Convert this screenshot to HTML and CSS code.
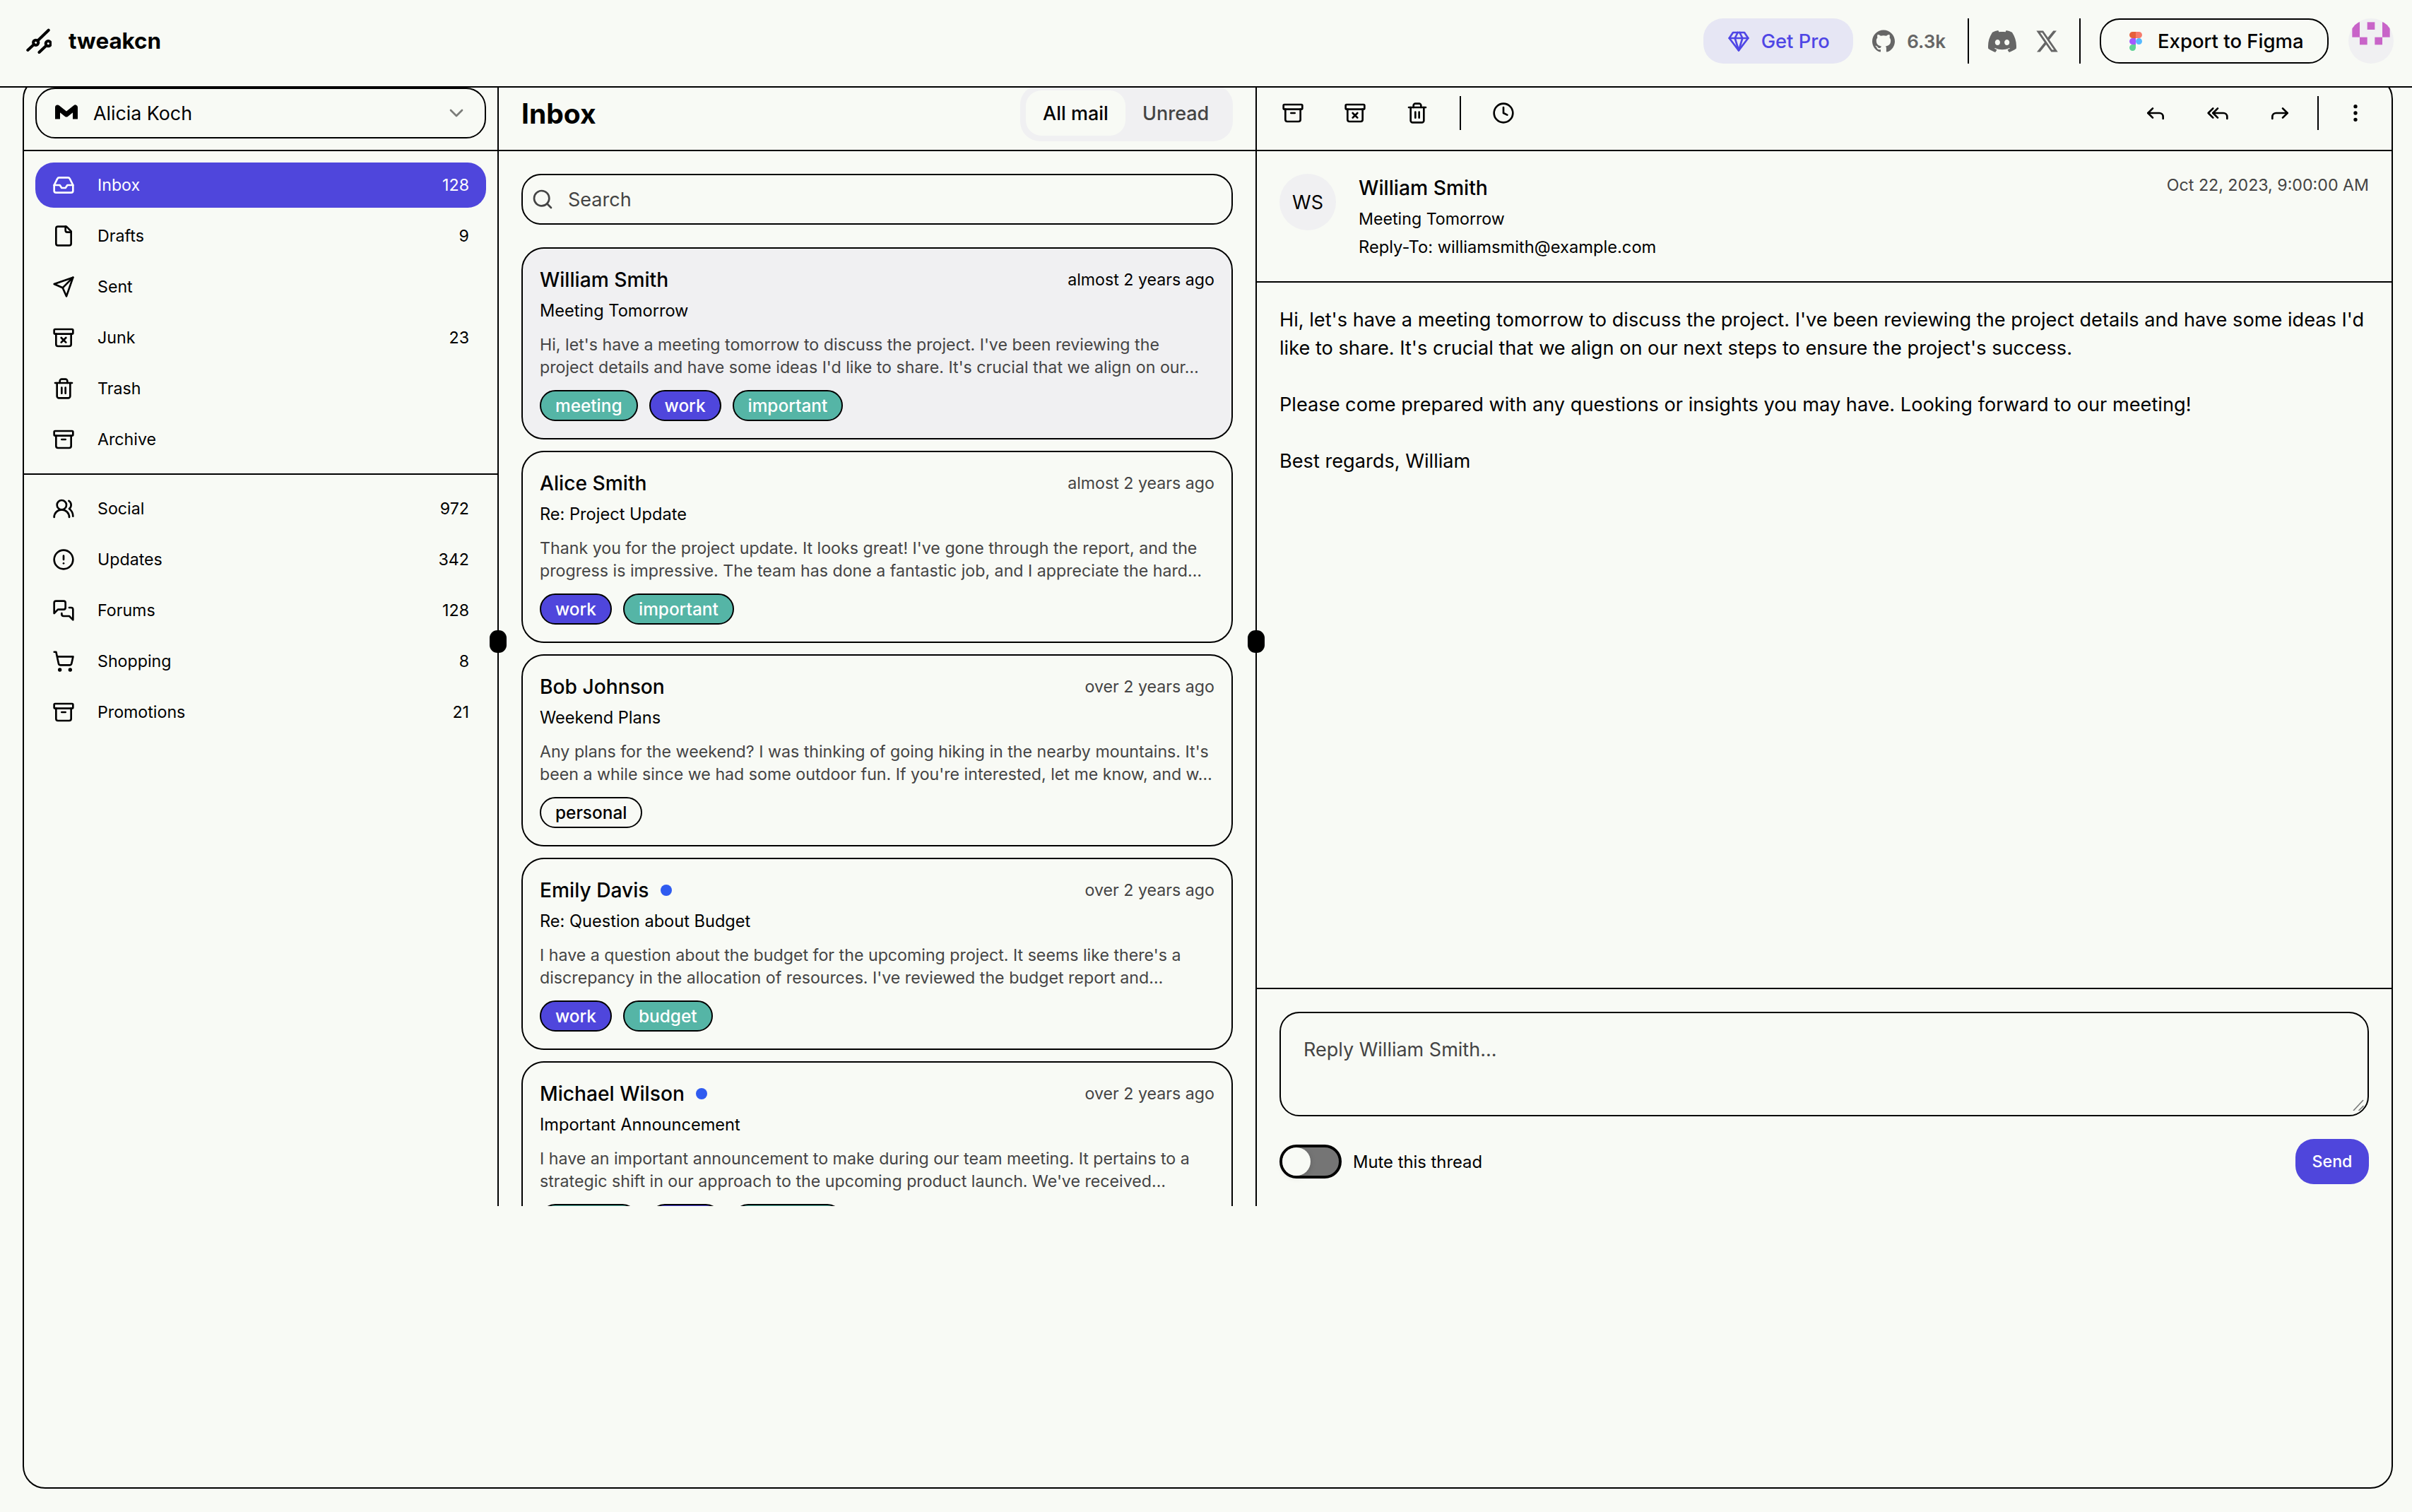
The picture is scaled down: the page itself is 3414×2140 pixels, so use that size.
FILE: index.html
```html
<!doctype html>
<html lang="en">
<head>
<meta charset="utf-8">
<title>tweakcn mail</title>
<link rel="stylesheet" href="styles.css">
</head>
<body>
<svg class="sprite" aria-hidden="true">
  <symbol id="i-inbox" viewBox="0 0 24 24"><polyline points="22 12 16 12 14 15 10 15 8 12 2 12"/><path d="M5.45 5.11 2 12v6a2 2 0 0 0 2 2h16a2 2 0 0 0 2-2v-6l-3.45-6.89A2 2 0 0 0 16.76 4H7.24a2 2 0 0 0-1.79 1.11z"/></symbol>
  <symbol id="i-file" viewBox="0 0 24 24"><path d="M15 2H6a2 2 0 0 0-2 2v16a2 2 0 0 0 2 2h12a2 2 0 0 0 2-2V7Z"/><path d="M14 2v4a2 2 0 0 0 2 2h4"/></symbol>
  <symbol id="i-send" viewBox="0 0 24 24"><path d="m22 2-7 20-4-9-9-4Z"/><path d="M22 2 11 13"/></symbol>
  <symbol id="i-junk" viewBox="0 0 24 24"><rect width="20" height="5" x="2" y="3" rx="1"/><path d="M4 8v11a2 2 0 0 0 2 2h12a2 2 0 0 0 2-2V8"/><path d="m9.5 17 5-5"/><path d="m9.5 12 5 5"/></symbol>
  <symbol id="i-trash" viewBox="0 0 24 24"><path d="M3 6h18"/><path d="M19 6v14c0 1-1 2-2 2H7c-1 0-2-1-2-2V6"/><path d="M8 6V4c0-1 1-2 2-2h4c1 0 2 1 2 2v2"/><line x1="10" x2="10" y1="11" y2="17"/><line x1="14" x2="14" y1="11" y2="17"/></symbol>
  <symbol id="i-archive" viewBox="0 0 24 24"><rect width="20" height="5" x="2" y="3" rx="1"/><path d="M4 8v11a2 2 0 0 0 2 2h12a2 2 0 0 0 2-2V8"/><path d="M10 12h4"/></symbol>
  <symbol id="i-users" viewBox="0 0 24 24"><path d="M18 21a8 8 0 0 0-16 0"/><circle cx="10" cy="8" r="5"/><path d="M22 20c0-3.37-2-6.5-4-8a5 5 0 0 0-.45-8.3"/></symbol>
  <symbol id="i-alert" viewBox="0 0 24 24"><circle cx="12" cy="12" r="10"/><line x1="12" x2="12" y1="8" y2="12"/><line x1="12" x2="12.01" y1="16" y2="16"/></symbol>
  <symbol id="i-messages" viewBox="0 0 24 24"><path d="M14 9a2 2 0 0 1-2 2H6l-4 4V4c0-1.1.9-2 2-2h8a2 2 0 0 1 2 2z"/><path d="M18 9h2a2 2 0 0 1 2 2v11l-4-4h-6a2 2 0 0 1-2-2v-1"/></symbol>
  <symbol id="i-cart" viewBox="0 0 24 24"><circle cx="8" cy="21" r="1"/><circle cx="19" cy="21" r="1"/><path d="M2.05 2.05h2l2.66 12.42a2 2 0 0 0 2 1.58h9.78a2 2 0 0 0 1.95-1.57l1.65-7.43H5.12"/></symbol>
  <symbol id="i-clock" viewBox="0 0 24 24"><circle cx="12" cy="12" r="10"/><polyline points="12 6 12 12 16 14"/></symbol>
  <symbol id="i-reply" viewBox="0 0 24 24"><polyline points="9 17 4 12 9 7"/><path d="M20 18v-2a4 4 0 0 0-4-4H4"/></symbol>
  <symbol id="i-replyall" viewBox="0 0 24 24"><polyline points="7 17 2 12 7 7"/><polyline points="12 17 7 12 12 7"/><path d="M22 18v-2a4 4 0 0 0-4-4H7"/></symbol>
  <symbol id="i-forward" viewBox="0 0 24 24"><polyline points="15 17 20 12 15 7"/><path d="M4 18v-2a4 4 0 0 1 4-4h12"/></symbol>
  <symbol id="i-more" viewBox="0 0 24 24"><circle cx="12" cy="12" r="1"/><circle cx="12" cy="5" r="1"/><circle cx="12" cy="19" r="1"/></symbol>
  <symbol id="i-search" viewBox="0 0 24 24"><circle cx="11" cy="11" r="8"/><path d="m21 21-4.3-4.3"/></symbol>
  <symbol id="i-chevron" viewBox="0 0 24 24"><path d="m6 9 6 6 6-6"/></symbol>
  <symbol id="i-gem" viewBox="0 0 24 24"><path d="M6 3h12l4 6-10 13L2 9Z"/><path d="M11 3 8 9l4 13 4-13-3-6"/><path d="M2 9h20"/></symbol>
</svg>

<header class="topbar">
  <a class="brand">
    <svg class="brand-mark" viewBox="0 0 36 36">
      <path d="M31.7 2.7 16.2 17.8"/><circle cx="13.7" cy="20.3" r="3.6"/><path d="M11.2 22.8 2.3 31"/>
      <path d="M18.5 34 28.8 24.2"/><circle cx="31.3" cy="21.7" r="3.6"/>
    </svg>
    <span>tweakcn</span>
  </a>
  <div class="top-actions">
    <a class="pro"><svg class="icon"><use href="#i-gem"/></svg><span>Get Pro</span></a>
    <a class="stars">
      <svg class="brandicon" viewBox="0 0 24 24"><path d="M12 .297c-6.63 0-12 5.373-12 12 0 5.303 3.438 9.8 8.205 11.385.6.113.82-.258.82-.577 0-.285-.01-1.04-.015-2.04-3.338.724-4.042-1.61-4.042-1.61C4.422 18.07 3.633 17.7 3.633 17.7c-1.087-.744.084-.729.084-.729 1.205.084 1.838 1.236 1.838 1.236 1.07 1.835 2.809 1.305 3.495.998.108-.776.417-1.305.76-1.605-2.665-.3-5.466-1.332-5.466-5.93 0-1.31.465-2.38 1.235-3.22-.135-.303-.54-1.523.105-3.176 0 0 1.005-.322 3.3 1.23.96-.267 1.98-.399 3-.405 1.02.006 2.04.138 3 .405 2.28-1.552 3.285-1.23 3.285-1.23.645 1.653.24 2.873.12 3.176.765.84 1.23 1.91 1.23 3.22 0 4.61-2.805 5.625-5.475 5.92.42.36.81 1.096.81 2.22 0 1.606-.015 2.896-.015 3.286 0 .315.21.69.825.57C20.565 22.092 24 17.592 24 12.297c0-6.627-5.373-12-12-12"/></svg>
      <span>6.3k</span>
    </a>
    <i class="vsep"></i>
    <svg class="discord" viewBox="0 2.8 24 18.4" preserveAspectRatio="none"><path d="M20.317 4.3698a19.7913 19.7913 0 00-4.8851-1.5152.0741.0741 0 00-.0785.0371c-.211.3753-.4447.8648-.6083 1.2495-1.8447-.2762-3.68-.2762-5.4868 0-.1636-.3933-.4058-.8742-.6177-1.2495a.077.077 0 00-.0785-.037 19.7363 19.7363 0 00-4.8852 1.515.0699.0699 0 00-.0321.0277C.5334 9.0458-.319 13.5799.0992 18.0578a.0824.0824 0 00.0312.0561c2.0528 1.5076 4.0413 2.4228 5.9929 3.0294a.0777.0777 0 00.0842-.0276c.4616-.6304.8731-1.2952 1.226-1.9942a.076.076 0 00-.0416-.1057c-.6528-.2476-1.2743-.5495-1.8722-.8923a.077.077 0 01-.0076-.1277c.1258-.0943.2517-.1923.3718-.2914a.0743.0743 0 01.0776-.0105c3.9278 1.7933 8.18 1.7933 12.0614 0a.0739.0739 0 01.0785.0095c.1202.099.246.1981.3728.2924a.077.077 0 01-.0066.1276 12.2986 12.2986 0 01-1.873.8914.0766.0766 0 00-.0407.1067c.3604.698.7719 1.3628 1.225 1.9932a.076.076 0 00.0842.0286c1.961-.6067 3.9495-1.5219 6.0023-3.0294a.077.077 0 00.0313-.0552c.5004-5.177-.8382-9.6739-3.5485-13.6604a.061.061 0 00-.0312-.0286zM8.02 15.3312c-1.1825 0-2.1569-1.0857-2.1569-2.419 0-1.3332.9555-2.4189 2.157-2.4189 1.2108 0 2.1757 1.0952 2.1568 2.419 0 1.3332-.9555 2.4189-2.1569 2.4189zm7.9748 0c-1.1825 0-2.1569-1.0857-2.1569-2.419 0-1.3332.9554-2.4189 2.1569-2.4189 1.2108 0 2.1757 1.0952 2.1568 2.419 0 1.3332-.946 2.4189-2.1568 2.4189Z"/></svg>
    <svg class="xlogo" viewBox="1 2 22 20" preserveAspectRatio="none"><path d="M18.244 2.25h3.308l-7.227 8.26 8.502 11.24H16.17l-5.214-6.817L4.99 21.75H1.68l7.73-8.835L1.254 2.25H8.08l4.713 6.231zm-1.161 17.52h1.833L7.084 4.126H5.117z"/></svg>
    <i class="vsep"></i>
    <a class="figma">
      <svg class="figma-mark" viewBox="0 0 200 300"><path class="f-green" d="M50 300c27.6 0 50-22.4 50-50v-50H50c-27.6 0-50 22.4-50 50s22.4 50 50 50z"/><path class="f-purple" d="M0 150c0-27.6 22.4-50 50-50h50v100H50c-27.6 0-50-22.4-50-50z"/><path class="f-red" d="M0 50C0 22.4 22.4 0 50 0h50v100H50C22.4 100 0 77.6 0 50z"/><path class="f-salmon" d="M100 0h50c27.6 0 50 22.4 50 50s-22.4 50-50 50h-50V0z"/><path class="f-blue" d="M200 150c0 27.6-22.4 50-50 50s-50-22.4-50-50 22.4-50 50-50 50 22.4 50 50z"/></svg>
      <span>Export to Figma</span>
    </a>
    <svg class="user" viewBox="0 0 192 192"><defs><clipPath id="user-clip"><circle cx="96" cy="96" r="96"/></clipPath></defs><circle class="user-bg" cx="96" cy="96" r="96"/><g class="user-px" clip-path="url(#user-clip)"><rect x="16" y="16" width="32" height="64"/><rect x="144" y="16" width="32" height="64"/><rect x="80" y="16" width="32" height="32"/><rect x="48" y="80" width="32" height="32"/><rect x="112" y="80" width="32" height="32"/></g></svg>
  </div>
</header>

<main class="frame">
  <div class="panes">
    <aside class="sidebar">
      <div class="toolbar">
        <button class="account">
          <svg class="m-mark" viewBox="0 0 32 24"><path d="M3.5 20.5V4L16 14 28.5 4v16.5"/></svg>
          <span class="account-name">Alicia Koch</span>
          <svg class="chev"><use href="#i-chevron"/></svg>
        </button>
      </div>
      <hr class="rule">
      <nav class="nav">
        <a class="nav-item active"><svg class="icon"><use href="#i-inbox"/></svg><span class="nav-label">Inbox</span><span class="nav-count">128</span></a>
        <a class="nav-item"><svg class="icon"><use href="#i-file"/></svg><span class="nav-label">Drafts</span><span class="nav-count">9</span></a>
        <a class="nav-item"><svg class="icon"><use href="#i-send"/></svg><span class="nav-label">Sent</span></a>
        <a class="nav-item"><svg class="icon"><use href="#i-junk"/></svg><span class="nav-label">Junk</span><span class="nav-count">23</span></a>
        <a class="nav-item"><svg class="icon"><use href="#i-trash"/></svg><span class="nav-label">Trash</span></a>
        <a class="nav-item"><svg class="icon"><use href="#i-archive"/></svg><span class="nav-label">Archive</span></a>
      </nav>
      <hr class="rule">
      <nav class="nav">
        <a class="nav-item"><svg class="icon"><use href="#i-users"/></svg><span class="nav-label">Social</span><span class="nav-count">972</span></a>
        <a class="nav-item"><svg class="icon"><use href="#i-alert"/></svg><span class="nav-label">Updates</span><span class="nav-count">342</span></a>
        <a class="nav-item"><svg class="icon"><use href="#i-messages"/></svg><span class="nav-label">Forums</span><span class="nav-count">128</span></a>
        <a class="nav-item"><svg class="icon"><use href="#i-cart"/></svg><span class="nav-label">Shopping</span><span class="nav-count">8</span></a>
        <a class="nav-item"><svg class="icon"><use href="#i-archive"/></svg><span class="nav-label">Promotions</span><span class="nav-count">21</span></a>
      </nav>
    </aside>

    <section class="list-pane">
      <i class="grip"></i>
      <div class="toolbar list-bar">
        <h1 class="list-title">Inbox</h1>
        <div class="tabs"><span class="tab on">All mail</span><span class="tab">Unread</span></div>
      </div>
      <hr class="rule">
      <div class="search-wrap">
        <label class="search"><svg class="search-icon"><use href="#i-search"/></svg><span>Search</span></label>
      </div>
      <div class="cards">
        <article class="card selected">
          <div class="card-head"><div class="who"><span class="who-name">William Smith</span></div><time class="when strong">almost 2 years ago</time></div>
          <div class="subject">Meeting Tomorrow</div>
          <p class="preview">Hi, let's have a meeting tomorrow to discuss the project. I've been reviewing the<br>project details and have some ideas I'd like to share. It's crucial that we align on our…</p>
          <div class="tags"><span class="tag teal">meeting</span><span class="tag indigo">work</span><span class="tag teal">important</span></div>
        </article>
        <article class="card">
          <div class="card-head"><div class="who"><span class="who-name">Alice Smith</span></div><time class="when">almost 2 years ago</time></div>
          <div class="subject">Re: Project Update</div>
          <p class="preview">Thank you for the project update. It looks great! I've gone through the report, and the<br>progress is impressive. The team has done a fantastic job, and I appreciate the hard…</p>
          <div class="tags"><span class="tag indigo">work</span><span class="tag teal">important</span></div>
        </article>
        <article class="card">
          <div class="card-head"><div class="who"><span class="who-name">Bob Johnson</span></div><time class="when">over 2 years ago</time></div>
          <div class="subject">Weekend Plans</div>
          <p class="preview">Any plans for the weekend? I was thinking of going hiking in the nearby mountains. It's<br>been a while since we had some outdoor fun. If you're interested, let me know, and w…</p>
          <div class="tags"><span class="tag plain">personal</span></div>
        </article>
        <article class="card">
          <div class="card-head"><div class="who"><span class="who-name">Emily Davis</span><i class="dot"></i></div><time class="when">over 2 years ago</time></div>
          <div class="subject">Re: Question about Budget</div>
          <p class="preview">I have a question about the budget for the upcoming project. It seems like there's a<br>discrepancy in the allocation of resources. I've reviewed the budget report and…</p>
          <div class="tags"><span class="tag indigo">work</span><span class="tag teal">budget</span></div>
        </article>
        <article class="card">
          <div class="card-head"><div class="who"><span class="who-name">Michael Wilson</span><i class="dot"></i></div><time class="when">over 2 years ago</time></div>
          <div class="subject">Important Announcement</div>
          <p class="preview">I have an important announcement to make during our team meeting. It pertains to a<br>strategic shift in our approach to the upcoming product launch. We've received…</p>
          <div class="tags"><span class="tag teal">meeting</span><span class="tag indigo">work</span><span class="tag teal">important</span></div>
        </article>
      </div>
    </section>

    <section class="detail-pane">
      <i class="grip"></i>
      <div class="toolbar detail-bar">
        <button class="tool"><svg class="icon"><use href="#i-archive"/></svg></button>
        <button class="tool"><svg class="icon"><use href="#i-junk"/></svg></button>
        <button class="tool"><svg class="icon"><use href="#i-trash"/></svg></button>
        <i class="tool-sep"></i>
        <button class="tool"><svg class="icon"><use href="#i-clock"/></svg></button>
        <span class="tool-gap"></span>
        <button class="tool"><svg class="icon"><use href="#i-reply"/></svg></button>
        <button class="tool"><svg class="icon"><use href="#i-replyall"/></svg></button>
        <button class="tool"><svg class="icon"><use href="#i-forward"/></svg></button>
        <i class="tool-sep narrow"></i>
        <button class="tool"><svg class="icon"><use href="#i-more"/></svg></button>
      </div>
      <hr class="rule">
      <div class="mail-head">
        <div class="avatar">WS</div>
        <div class="mail-meta">
          <div class="mail-from">William Smith</div>
          <div class="mail-line">Meeting Tomorrow</div>
          <div class="mail-line reply-line"><span class="reply-key">Reply-To:</span> williamsmith@example.com</div>
        </div>
        <time class="mail-date">Oct 22, 2023, 9:00:00 AM</time>
      </div>
      <hr class="rule">
      <div class="mail-body">Hi, let's have a meeting tomorrow to discuss the project. I've been reviewing the project details and have some ideas I'd like to share. It's crucial that we align on our next steps to ensure the project's success.

Please come prepared with any questions or insights you may have. Looking forward to our meeting!

Best regards, William</div>
      <hr class="rule">
      <form class="reply">
        <div class="reply-field">
          <textarea class="reply-box" placeholder="Reply William Smith..."></textarea>
          <svg class="resizer" viewBox="0 0 16 16"><path d="M15 1 1 16"/><path d="M15.5 9 8.5 16"/></svg>
        </div>
        <div class="reply-foot">
          <label class="mute"><span class="switch"><span class="knob"></span></span><span>Mute this thread</span></label>
          <button type="button" class="send">Send</button>
        </div>
      </form>
    </section>
  </div>
</main>
</body>
</html>
```
FILE: styles.css
```css
* { box-sizing: border-box; }
html, body { margin: 0; height: 2140px; }
body {
  background: #f8faf5;
  color: #000;
  font-family: Inter, "Open Sans", sans-serif;
  font-size: 23.2px;
  overflow: hidden;
  padding: 108px 0 0 32px;
}
.sprite { display: none; }
a { color: inherit; text-decoration: none; }
button { font: inherit; color: inherit; background: none; border: 0; padding: 0; }
p, h1 { margin: 0; }
.icon, .chev, .search-icon {
  fill: none; stroke: currentColor; stroke-width: 2; stroke-linecap: round; stroke-linejoin: round;
}
.icon { width: 32px; height: 32px; flex: none; }
.rule { border: 0; height: 2px; margin: 0; background: #000; flex: none; }

/* top bar */
.topbar {
  position: absolute; top: 0; left: 0; right: 0; z-index: 5;
  height: 124px;
  display: flex; align-items: center; justify-content: space-between;
  padding: 0 26px 6px 37px;
  background: #f8faf5;
  border-bottom: 2px solid #000;
}
.brand { display: flex; align-items: center; gap: 24px; font-size: 31.4px; font-weight: 700; }
.brand-mark { width: 36px; height: 36px; fill: none; stroke: #000; stroke-width: 4; stroke-linecap: round; }
.top-actions { display: flex; align-items: center; height: 64px; }
.pro {
  width: 212px; height: 64px; display: flex; align-items: center; justify-content: center; gap: 16px;
  background: #e6e6f4; color: #4f46e5; border-radius: 28px; font-size: 27.3px; font-weight: 500;
}
.stars {
  display: flex; align-items: center; gap: 17px; margin-left: 27px;
  color: #666; font-size: 26px; font-weight: 600;
}
.brandicon { width: 32px; height: 32px; fill: #666; }
.vsep { width: 2px; height: 64px; background: #000; flex: none; margin-left: 31px; }
.discord { width: 40px; height: 31px; fill: #666; margin-left: 27px; }
.xlogo { width: 31px; height: 31px; fill: #666; margin-left: 28px; }
.vsep + .figma { margin-left: 27px; }
.xlogo + .vsep { margin-left: 30px; }
.figma {
  width: 324px; height: 64px; display: flex; align-items: center; gap: 22px; padding-left: 40px;
  border: 2px solid #000; border-radius: 28px; font-size: 27.5px; font-weight: 500;
}
.figma-mark { width: 18px; height: 27px; }
.f-green { fill: #5fd394; }
.f-purple { fill: #a259ff; }
.f-red { fill: #e6603a; }
.f-salmon { fill: #f67c6c; }
.f-blue { fill: #55b8ff; }
.user { width: 64px; height: 64px; margin-left: 28px; }
.user-bg { fill: #f0f0f2; }
.user-px { fill: #c864c8; }

/* frame */
.frame {
  width: 3355px; height: 1999px;
  border: 2px solid #000; border-radius: 32px; overflow: hidden;
}
.panes { display: grid; grid-template-columns: 670px 1073px 1608px; grid-template-rows: 1597px; height: 1597px; }
.toolbar { height: 102px; display: flex; align-items: center; padding-bottom: 2px; flex: none; }

/* sidebar */
.sidebar { display: flex; flex-direction: column; min-width: 0; min-height: 0; }
.sidebar .toolbar { padding-left: 16px; padding-right: 16px; }
.account {
  width: 638px; height: 72px; display: flex; align-items: center;
  padding: 0 24px 0 26px;
  border: 2px solid #000; border-radius: 28px; font-size: 26.8px; text-align: left;
}
.m-mark { width: 32px; height: 24px; fill: none; stroke: #000; stroke-width: 7; stroke-linejoin: round; flex: none; }
.account-name { flex: 1; margin-left: 22px; }
.chev { width: 32px; height: 32px; stroke: #000; opacity: .5; }
.nav { display: flex; flex-direction: column; gap: 8px; padding: 16px; }
.nav-item {
  height: 64px; display: flex; align-items: center; gap: 32px; padding: 0 24px; border-radius: 26px;
}
.nav-item.active { background: #4f46dc; color: #fff; }
.nav-label { flex: 1; }
.nav-count { text-align: right; }

/* list */
.list-pane, .detail-pane { position: relative; border-left: 2px solid #000; display: flex; flex-direction: column; min-width: 0; min-height: 0; }
.grip {
  position: absolute; left: -13px; top: calc(50% - 17px); z-index: 2;
  width: 24px; height: 32px; border-radius: 11px; background: #000;
}
.list-bar { justify-content: space-between; padding-left: 32px; padding-right: 32px; }
.list-title { font-size: 39px; font-weight: 700; }
.tabs { width: 301px; height: 80px; display: flex; padding: 8px; background: #f0f0f2; border-radius: 28px; flex: none; }
.tab { display: flex; align-items: center; padding: 0 24px; font-size: 27px; font-weight: 500; color: #444; border-radius: 22px; white-space: nowrap; }
.tab.on { width: 141px; background: #f8faf5; color: #000; }
.search-wrap { padding: 32px 32px 0; flex: none; }
.search {
  height: 72px; display: flex; align-items: center; gap: 20px; padding-left: 12px;
  border: 2px solid #000; border-radius: 28px; color: #444; font-size: 27px;
}
.search-icon { width: 32px; height: 32px; }
.cards { flex: 1; min-height: 0; overflow: hidden; display: flex; flex-direction: column; gap: 16px; padding: 32px 32px 0; }
.card {
  flex: none; height: 272px; padding: 24px; border: 2px solid #000; border-radius: 32px;
}
.card.selected { background: #f0f0f2; }
.card-head { display: flex; justify-content: space-between; align-items: center; height: 40px; }
.who { display: flex; align-items: center; gap: 16px; }
.who-name { font-size: 28.2px; font-weight: 550; line-height: 40px; }
.dot { width: 16px; height: 16px; border-radius: 50%; background: #2f5bf0; }
.when { color: #444; }
.when.strong { color: #000; }
.subject { margin-top: 8px; line-height: 32px; font-weight: 400; font-size: 23.6px; }
.preview { margin-top: 16px; line-height: 32px; color: #444; white-space: nowrap; }
.tags { display: flex; gap: 16px; margin-top: 16px; }
.tag {
  height: 44px; display: flex; align-items: center; padding: 0 20px;
  border: 2px solid #000; border-radius: 22px; font-size: 24.4px; font-weight: 550; color: #fff;
}
.teal { background: #55b5a6; }
.indigo { background: #4f46dc; }
.plain { color: #000; }

/* detail */
.detail-bar { padding-left: 11px; padding-right: 11px; gap: 8px; }
.tool { width: 80px; height: 80px; display: flex; align-items: center; justify-content: center; flex: none; }
.tool-sep { width: 2px; height: 48px; background: #000; margin: 0 12px; flex: none; }
.tool-sep.narrow { margin: 0 4px 0 5px; }
.tool-gap { flex: 1; }
.mail-head { height: 184px; padding: 32px; display: flex; flex: none; }
.avatar {
  width: 80px; height: 80px; border-radius: 50%; background: #f0f0f2;
  display: flex; align-items: center; justify-content: center; font-size: 27px; flex: none;
}
.mail-meta { flex: 1; margin-left: 32px; }
.mail-from { font-size: 28.3px; font-weight: 550; line-height: 40px; }
.mail-line { line-height: 32px; margin-top: 8px; }
.reply-line { font-size: 23.7px; }
.reply-key { font-weight: 400; }
.mail-date { line-height: 32px; color: #444; }
.mail-body { flex: 1; min-height: 0; padding: 33px 32px 0; font-size: 27.18px; line-height: 40px; white-space: pre-wrap; }
.reply { padding: 32px 32px 0; flex: none; height: 307px; }
.reply-field { position: relative; height: 148px; }
.reply-box {
  display: block; width: 100%; height: 100%; padding: 36px 32px 24px;
  border: 2px solid #000; border-radius: 28px; background: transparent; outline: 0;
  font: 27px/32px Inter, sans-serif; color: #000; resize: none;
}
.reply-box::placeholder { color: #444; opacity: 1; }
.resizer { position: absolute; right: 7px; bottom: 8px; width: 16px; height: 16px; fill: none; stroke: #777; stroke-width: 1.6; }
.reply-foot { margin-top: 32px; display: flex; align-items: center; justify-content: space-between; }
.mute { display: flex; align-items: center; gap: 16px; font-size: 23.8px; font-weight: 400; }
.switch { width: 88px; height: 48px; border: 4px solid #000; border-radius: 24px; background: #757575; display: flex; align-items: center; padding-left: 0; }
.knob { width: 40px; height: 40px; border-radius: 50%; background: #f8faf5; box-shadow: 0 2px 8px rgba(0,0,0,.15); }
.send { width: 104px; height: 64px; border-radius: 26px; background: #4f46dc; color: #fff; font-weight: 500; }
```
